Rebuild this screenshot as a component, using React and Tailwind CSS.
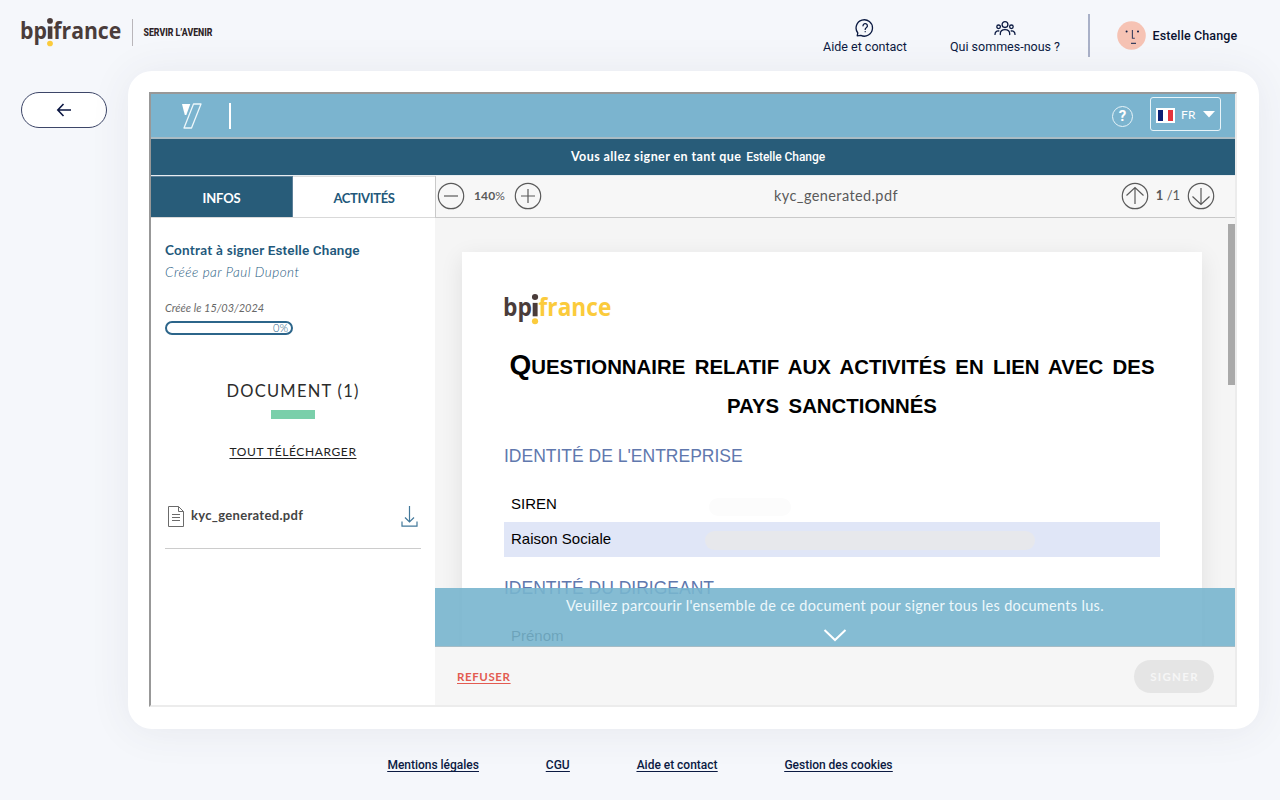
const LATO = "font-[Lato,sans-serif]";
const PLEX = "font-[Roboto,sans-serif]";

function BpiLogo({ className, second }) {
  return (
    <svg className={`overflow-visible ${className}`} viewBox="0 0 100 30" preserveAspectRatio="none" fontFamily="'Open Sans', sans-serif" fontWeight="700" fontSize="24">
      <text x="-1" y="21.600" textLength="27" lengthAdjust="spacingAndGlyphs" fill="#4a3c3a">bp</text>
      <text x="32.300" y="21.600" textLength="68" lengthAdjust="spacingAndGlyphs" fill={second}>france</text>
      <rect x="26.800" y="8.600" width="4.600" height="13" fill="#4a3c3a" />
      <circle cx="29" cy="3" r="2.900" fill="#4a3c3a" />
      <circle cx="29" cy="26.400" r="2.900" fill="#fbcb3c" />
    </svg>
  );
}

function CircleIcon({ children }) {
  return (
    <svg className="size-[28px] shrink-0" viewBox="0 0 28 28" fill="none" stroke="#5a5a5a" strokeWidth="1.2">
      <circle cx="14" cy="14" r="12.7" />
      {children}
    </svg>
  );
}

function Header() {
  return (
    <header className={`flex h-[71px] shrink-0 ${PLEX} text-[#0b1a42]`}>
      <BpiLogo className="ml-[21px] mt-[18px] h-[29px] w-[100px]" second="#4a3c3a" />
      <div className="ml-[11px] mt-[19px] h-[27px] w-px bg-[#b9b6ba]" />
      <svg className="ml-[10px] mt-[26px] h-[13px] w-[71px] overflow-visible" viewBox="0 0 71 13" fontFamily="Roboto, sans-serif" fontWeight="800" fontSize="11.500">
        <text x="0.5" y="10.400" textLength="69" lengthAdjust="spacingAndGlyphs" fill="#2c2326">SERVIR L’AVENIR</text>
      </svg>
      <div className="ml-[599px] flex w-[104px] flex-col items-center pt-[18px]">
        <svg className="size-[20px]" viewBox="0 0 20 20" fill="none" stroke="#0b1a42" strokeWidth="1.3" strokeLinecap="round" strokeLinejoin="round">
          <path d="M2.200 17.800l.6-2.800a8.200 8.200 0 1 1 3 2.400z" />
          <path d="M8 7.800a2.200 2.200 0 1 1 3.300 1.900c-.8.500-1.100.8-1.100 1.700M10.200 13.600v.1" />
        </svg>
        <span className="whitespace-nowrap text-[12.500px] leading-[17px]">Aide et contact</span>
      </div>
      <div className="ml-[28px] flex w-[120px] flex-col items-center pt-[18px]">
        <svg className="h-[20px] w-[22px]" viewBox="0 0 22 20" fill="none" stroke="#0b1a42" strokeWidth="1.300" strokeLinecap="round">
          <circle cx="11" cy="6.600" r="2.900" /><circle cx="4.600" cy="8.800" r="1.800" /><circle cx="17.400" cy="8.800" r="1.800" />
          <path d="M6.300 16.600v-.8c0-5.600 9.400-5.600 9.400 0v.8M1 16.400c0-2.400 1.500-3.800 3.800-3.400M21 16.400c0-2.400-1.500-3.800-3.800-3.400" />
        </svg>
        <span className="whitespace-nowrap text-[12.500px] leading-[17px]">Qui sommes-nous ?</span>
      </div>
      <div className="ml-[23px] mt-[14px] h-[43px] w-[1.500px] bg-[#a9b1c8]" />
      <svg className="ml-[27px] mt-[21px] size-[29px]" viewBox="0 0 29 29">
        <circle cx="14.500" cy="14.500" r="14.300" fill="#f6c3b4" />
        <g fill="none" stroke="#39405f" strokeWidth="1.100"><path d="M15.400 9v8.200h2.400M14 22.400h5" /></g>
        <circle cx="9.600" cy="10.500" r="1" fill="#0b1a42" /><circle cx="21" cy="10.500" r="1" fill="#0b1a42" />
      </svg>
      <span className="ml-[7px] mt-[27px] whitespace-nowrap text-[12.500px] font-medium leading-[17px] tracking-[0.120px] text-[#0a1230]">Estelle Change</span>
    </header>
  );
}

function TopBar() {
  return (
    <div className="flex h-[45px] shrink-0 border-b-2 border-[#a9bcc5] bg-[#7bb4cf]">
      <svg className="ml-[30px] mt-[8px] h-[28px] w-[22px]" viewBox="0 0 22 28">
        <path d="M1 2h8.300L5.300 13H3.800z" fill="#fff" />
        <path d="M12.500 2H20L10.500 26H3z" fill="none" stroke="#eef7fb" strokeWidth="1.300" strokeLinejoin="round" />
      </svg>
      <div className="ml-[26px] mt-[9px] h-[26px] w-[2px] bg-white" />
      <div className="ml-auto mt-[12px] flex size-[21px] items-center justify-center rounded-full border border-[#e8f4f9] font-[Roboto,sans-serif] text-[15px] font-bold text-white">?</div>
      <div className="ml-[17px] mr-[14px] mt-[3px] flex h-[34px] w-[71px] items-center rounded-[3px] border border-[#e8f4f9]">
        <svg className="ml-[5px] mt-[2px] h-[15px] w-[19px]" viewBox="0 0 19 15">
          <rect width="19" height="15" fill="#fff" /><rect x="2" y="2" width="5" height="11" fill="#0b1f74" /><rect x="12" y="2" width="5" height="11" fill="#e3343c" />
        </svg>
        <span className={`ml-[6px] mt-[2px] ${LATO} text-[12px] leading-4 tracking-[0.300px] text-white`}>FR</span>
        <svg className="ml-[7px] h-[7px] w-[12px]" viewBox="0 0 12 7"><path d="M0 0h12L6 6.500z" fill="#fff" /></svg>
      </div>
    </div>
  );
}

function Sidebar() {
  return (
    <aside className={`flex w-[284px] shrink-0 flex-col bg-white ${LATO}`}>
      <div className="flex h-[42px] shrink-0 border-b border-[#d9d9d9] text-[13px] font-bold">
        <div className="flex w-[142px] items-center justify-center border-r border-t border-[#5d8099] bg-[#285c79] pt-[3px] tracking-[-0.200px] text-white">INFOS</div>
        <div className="flex flex-1 items-center justify-center border-t border-[#dedede] pt-[3px] tracking-[-0.350px] text-[#22587a]">ACTIVITÉS</div>
      </div>
      <div className="flex flex-col items-start whitespace-nowrap pl-[14px] pt-[22px]">
        <div className="text-[13.500px] font-bold leading-[20px] tracking-[0.250px] text-[#1f597c]">Contrat à signer <span className="font-[Roboto,sans-serif] font-semibold tracking-[0.120px]">Estelle Change</span></div>
        <div className="mt-[2px] text-[13.500px] font-light italic leading-[20px] tracking-[0.480px] text-[#1f5c82]">Créée par Paul Dupont</div>
        <div className="mt-[19px] text-[11px] italic leading-[14px] text-[#686868]">Créée le 15/03/2024</div>
        <div className="mt-[6px] flex h-[14px] w-[128px] items-center justify-end rounded-full border-2 border-[#2c658a] pr-[3px] text-[11px] font-light leading-[10px] text-[#2a6488]">0%</div>
      </div>
      <div className="mt-[45px] flex flex-col items-center whitespace-nowrap">
        <div className="text-[16.500px] leading-[22px] tracking-[1.250px] text-[#2c2c2c]">DOCUMENT (1)</div>
        <div className="mt-[8px] h-[9px] w-[44px] bg-[#7acfaa]" />
        <div className="mt-[25px] text-[12px] leading-[16px] tracking-[0.600px] text-[#222] underline underline-offset-2">TOUT TÉLÉCHARGER</div>
      </div>
      <div className="ml-[14px] mt-[44px] flex h-[45px] w-[256px] border-b-[1.500px] border-[#ccc]">
        <svg className="ml-[2px] mt-[1px] h-[23px] w-[18px]" viewBox="0 0 18 23" fill="none" stroke="#6b6b6b" strokeWidth="1">
          <path d="M1.500 1.500h10l5 5v15h-15zM11.500 1.500v5h5M5 9.500h8M5 12.500h8M5 15.500h8" />
        </svg>
        <span className="ml-[6px] mt-[3px] text-[13px] font-bold leading-[16px] tracking-[0.320px] text-[#444]">kyc_generated.pdf</span>
        <svg className="ml-auto mr-[3px] mt-[1px] h-[23px] w-[17px]" viewBox="0 0 17 23" fill="none" stroke="#42789a" strokeWidth="1.200">
          <path d="M8.500 1v16M4 12.500l4.500 4.500 4.500-4.500M1 16.500v4.700h15v-4.700" />
        </svg>
      </div>
    </aside>
  );
}

function Viewer() {
  return (
    <section className="flex min-w-0 flex-1 flex-col bg-[#f5f5f5]">
      <div className={`flex h-[42px] shrink-0 items-center border-b border-l border-[#c9c9c9] bg-[#f7f7f7] pb-[1px] ${LATO} text-[#5a5a5a]`}>
        <div className="ml-[1px] flex w-[336px] items-center">
          <CircleIcon><path d="M7 14h14" /></CircleIcon>
          <span className="w-[49px] text-center text-[12px] tracking-[0.100px]"><b>140</b>%</span>
          <CircleIcon><path d="M7 14h14M14 7v14" /></CircleIcon>
        </div>
        <span className="w-[126px] whitespace-nowrap text-center text-[14.500px] tracking-[0.400px]">kyc_generated.pdf</span>
        <div className="ml-auto mr-[20px] flex items-center">
          <CircleIcon><path d="M14 22V6M5.500 13.500L14 5.500l8.500 8" /></CircleIcon>
          <span className="w-[38px] whitespace-nowrap text-center text-[13px]"><b>1</b> /1</span>
          <CircleIcon><path d="M14 6v16M5.500 14.500l8.500 8 8.500-8" /></CircleIcon>
        </div>
      </div>
      <div className="relative flex h-[429px] shrink-0 overflow-hidden font-['Liberation_Sans',sans-serif]">
        <div className="ml-[27px] mt-[34px] flex h-[500px] w-[740px] flex-col bg-white px-[42px] shadow-[0_6px_22px_rgba(0,0,0,0.090)]">
          <BpiLogo className="mt-[42px] h-[31px] w-[107px] shrink-0" second="#fbcb3c" />
          <div className="-ml-[2px] mt-[20px] flex w-[660px] flex-col items-center whitespace-nowrap text-[20.400px] font-bold uppercase leading-[39px] text-black [word-spacing:3.700px]">
            <div><span className="text-[28px]">Q</span>uestionnaire relatif aux activités en lien avec des</div>
            <div>pays sanctionnés</div>
          </div>
          <div className="mt-[20px] text-[17.500px] leading-[20px] text-[#6078ae]">IDENTITÉ DE L'ENTREPRISE</div>
          <div className="mt-[21px] flex h-[35px] w-[656px] items-center pl-[7px] text-[15px] text-black">
            <span className="w-[198px]">SIREN</span><span className="mt-[4px] h-[18px] w-[82px] rounded-full bg-[#fcfcfc]" />
          </div>
          <div className="flex h-[35px] w-[656px] items-center bg-[#e0e6f7] pl-[7px] text-[15px] text-black">
            <span className="w-[194px]">Raison Sociale</span><span className="mt-[2px] h-[19px] w-[330px] rounded-full bg-[#e7e8ec]" />
          </div>
          <div className="mt-[21px] text-[17.500px] leading-[20px] text-[#6078ae]">IDENTITÉ DU DIRIGEANT</div>
          <div className="mt-[29px] pl-[7px] text-[15px] leading-[18px] text-black">Prénom</div>
        </div>
        <div className="ml-auto mt-[6px] h-[161px] w-[7px] bg-[#a9a9a9]" />
        <div className={`absolute inset-x-0 bottom-0 flex h-[59px] flex-col items-center border-b border-[#a5bcc6] bg-[#78b5ce]/90 pt-[8px] ${LATO} text-white`}>
          <span className="whitespace-nowrap text-[14.500px] leading-[20px] tracking-[0.320px] text-[#eef8fb]">Veuillez parcourir l'ensemble de ce document pour signer tous les documents lus.</span>
          <svg className="mt-[12px] h-[14px] w-[24px]" viewBox="0 0 24 14" fill="none" stroke="#fff" strokeWidth="2"><path d="M1.500 2L12 12 22.500 2" /></svg>
        </div>
      </div>
      <div className={`flex flex-1 items-center justify-between bg-[#f6f6f6] pl-[22px] pr-[21px] ${LATO} text-[11.500px]`}>
        <span className="pt-[2px] font-bold tracking-[0.600px] text-[#e35b51] underline underline-offset-2">REFUSER</span>
        <button className="h-[33px] w-[80px] rounded-full bg-[#e5e5e5] pl-[1px] pt-[2px] font-bold tracking-[1.300px] text-[#f6f6f6]">SIGNER</button>
      </div>
    </section>
  );
}

export default function App() {
  return (
    <div className="flex h-[800px] w-[1280px] flex-col overflow-hidden bg-[#f5f7fb]">
      <Header />
      <div className="flex h-[658px] shrink-0">
        <div className="w-[128px] shrink-0 pl-[21px] pt-[21px]">
          <button className="flex h-[36px] w-[86px] items-center justify-center rounded-full border border-[#3d4668] bg-white">
            <svg className="h-[14px] w-[16px]" viewBox="0 0 16 14" fill="none" stroke="#0b1642" strokeWidth="1.600"><path d="M15 7H2M7.500 1L1.800 7l5.700 6" /></svg>
          </button>
        </div>
        <main className="w-[1131px] rounded-[24px] bg-white pl-[21px] pt-[21px] shadow-[0_2px_40px_rgba(60,65,90,0.080)]">
          <div className="flex h-[615px] w-[1088px] flex-col border-2 border-b-[#ececec] border-l-[#989898] border-r-[#ececec] border-t-[#989898]">
            <TopBar />
            <div className={`flex h-[37px] shrink-0 items-center justify-center border-b border-[#e7edf1] bg-[#285c79] pl-[10px] ${LATO} text-[12.500px] font-bold tracking-[0.420px] text-white`}>
              Vous allez signer en tant que<span className="ml-[5px] font-[Roboto,sans-serif] text-[12px] font-medium tracking-[-0.080px]">Estelle Change</span>
            </div>
            <div className="flex min-h-0 flex-1"><Sidebar /><Viewer /></div>
          </div>
        </main>
      </div>
      <footer className={`flex flex-1 justify-center gap-[67px] pt-[27px] ${PLEX} text-[12px] font-medium leading-[18px] tracking-[-0.020px] text-[#0b1a42] underline underline-offset-2`}>
        <a>Mentions légales</a><a>CGU</a><a>Aide et contact</a><a>Gestion des cookies</a>
      </footer>
    </div>
  );
}
